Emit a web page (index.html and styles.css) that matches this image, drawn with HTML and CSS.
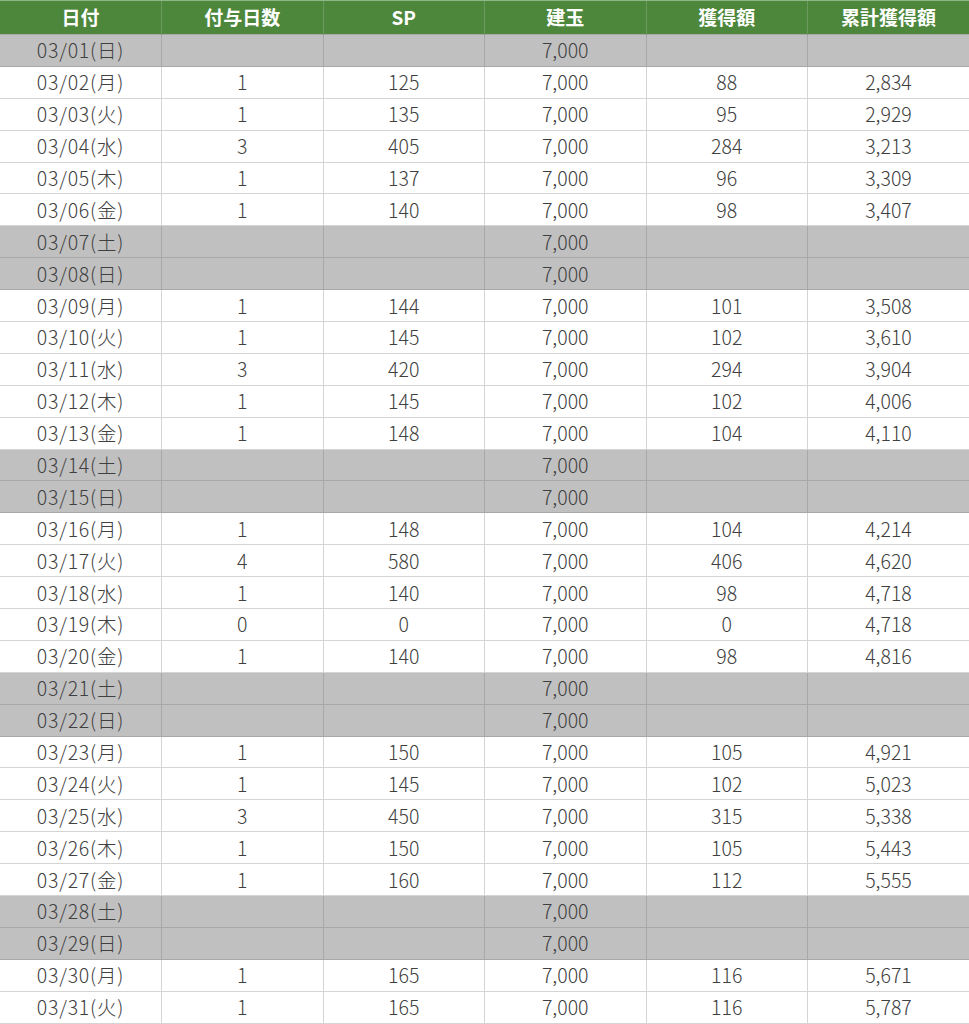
FILE: index.html
```html
<!DOCTYPE html>
<html lang="ja">
<head>
<meta charset="utf-8">
<link rel="stylesheet" href="styles.css">
</head>
<body>
<table class="tbl">
<thead>
<tr><th>日付</th><th>付与日数</th><th>SP</th><th>建玉</th><th>獲得額</th><th>累計獲得額</th></tr>
</thead>
<tbody>
<tr class="off"><td>03/01(日)</td><td></td><td></td><td>7,000</td><td></td><td></td></tr>
<tr><td>03/02(月)</td><td>1</td><td>125</td><td>7,000</td><td>88</td><td>2,834</td></tr>
<tr><td>03/03(火)</td><td>1</td><td>135</td><td>7,000</td><td>95</td><td>2,929</td></tr>
<tr><td>03/04(水)</td><td>3</td><td>405</td><td>7,000</td><td>284</td><td>3,213</td></tr>
<tr><td>03/05(木)</td><td>1</td><td>137</td><td>7,000</td><td>96</td><td>3,309</td></tr>
<tr><td>03/06(金)</td><td>1</td><td>140</td><td>7,000</td><td>98</td><td>3,407</td></tr>
<tr class="off"><td>03/07(土)</td><td></td><td></td><td>7,000</td><td></td><td></td></tr>
<tr class="off"><td>03/08(日)</td><td></td><td></td><td>7,000</td><td></td><td></td></tr>
<tr><td>03/09(月)</td><td>1</td><td>144</td><td>7,000</td><td>101</td><td>3,508</td></tr>
<tr><td>03/10(火)</td><td>1</td><td>145</td><td>7,000</td><td>102</td><td>3,610</td></tr>
<tr><td>03/11(水)</td><td>3</td><td>420</td><td>7,000</td><td>294</td><td>3,904</td></tr>
<tr><td>03/12(木)</td><td>1</td><td>145</td><td>7,000</td><td>102</td><td>4,006</td></tr>
<tr><td>03/13(金)</td><td>1</td><td>148</td><td>7,000</td><td>104</td><td>4,110</td></tr>
<tr class="off"><td>03/14(土)</td><td></td><td></td><td>7,000</td><td></td><td></td></tr>
<tr class="off"><td>03/15(日)</td><td></td><td></td><td>7,000</td><td></td><td></td></tr>
<tr><td>03/16(月)</td><td>1</td><td>148</td><td>7,000</td><td>104</td><td>4,214</td></tr>
<tr><td>03/17(火)</td><td>4</td><td>580</td><td>7,000</td><td>406</td><td>4,620</td></tr>
<tr><td>03/18(水)</td><td>1</td><td>140</td><td>7,000</td><td>98</td><td>4,718</td></tr>
<tr><td>03/19(木)</td><td>0</td><td>0</td><td>7,000</td><td>0</td><td>4,718</td></tr>
<tr><td>03/20(金)</td><td>1</td><td>140</td><td>7,000</td><td>98</td><td>4,816</td></tr>
<tr class="off"><td>03/21(土)</td><td></td><td></td><td>7,000</td><td></td><td></td></tr>
<tr class="off"><td>03/22(日)</td><td></td><td></td><td>7,000</td><td></td><td></td></tr>
<tr><td>03/23(月)</td><td>1</td><td>150</td><td>7,000</td><td>105</td><td>4,921</td></tr>
<tr><td>03/24(火)</td><td>1</td><td>145</td><td>7,000</td><td>102</td><td>5,023</td></tr>
<tr><td>03/25(水)</td><td>3</td><td>450</td><td>7,000</td><td>315</td><td>5,338</td></tr>
<tr><td>03/26(木)</td><td>1</td><td>150</td><td>7,000</td><td>105</td><td>5,443</td></tr>
<tr><td>03/27(金)</td><td>1</td><td>160</td><td>7,000</td><td>112</td><td>5,555</td></tr>
<tr class="off"><td>03/28(土)</td><td></td><td></td><td>7,000</td><td></td><td></td></tr>
<tr class="off"><td>03/29(日)</td><td></td><td></td><td>7,000</td><td></td><td></td></tr>
<tr><td>03/30(月)</td><td>1</td><td>165</td><td>7,000</td><td>116</td><td>5,671</td></tr>
<tr><td>03/31(火)</td><td>1</td><td>165</td><td>7,000</td><td>116</td><td>5,787</td></tr>
</tbody>
</table>
</body>
</html>
```

FILE: styles.css
```css
html, body {
  margin: 0;
  padding: 0;
  background: #ffffff;
}
.tbl {
  width: 969px;
  border-collapse: collapse;
  table-layout: fixed;
  font-family: "Noto Sans CJK JP", "Noto Sans", sans-serif;
  color: #404040;
}
.tbl th {
  height: 32px;
  padding: 0 0 1px 0;
  background: #4d873c;
  color: #ffffff;
  font-size: 19px;
  font-weight: bold;
  line-height: 20px;
  text-align: center;
  border-left: 1px solid #6a9a5c;
  border-top: 1px solid #8fb684;
}
.tbl th:first-child { border-left: none; }
.tbl td {
  height: 30.9px;
  padding: 0;
  font-size: 19.5px;
  font-weight: 300;
  line-height: 20px;
  text-align: center;
  border: 1px solid #d4d4d4;
}
.tbl td:first-child {
  border-left: none;
  letter-spacing: 0.8px;
}
.tbl td:last-child { border-right: none; }
.tbl tr.off td {
  background: #c0c0c0;
  border-color: #a8a8a8;
}
```
